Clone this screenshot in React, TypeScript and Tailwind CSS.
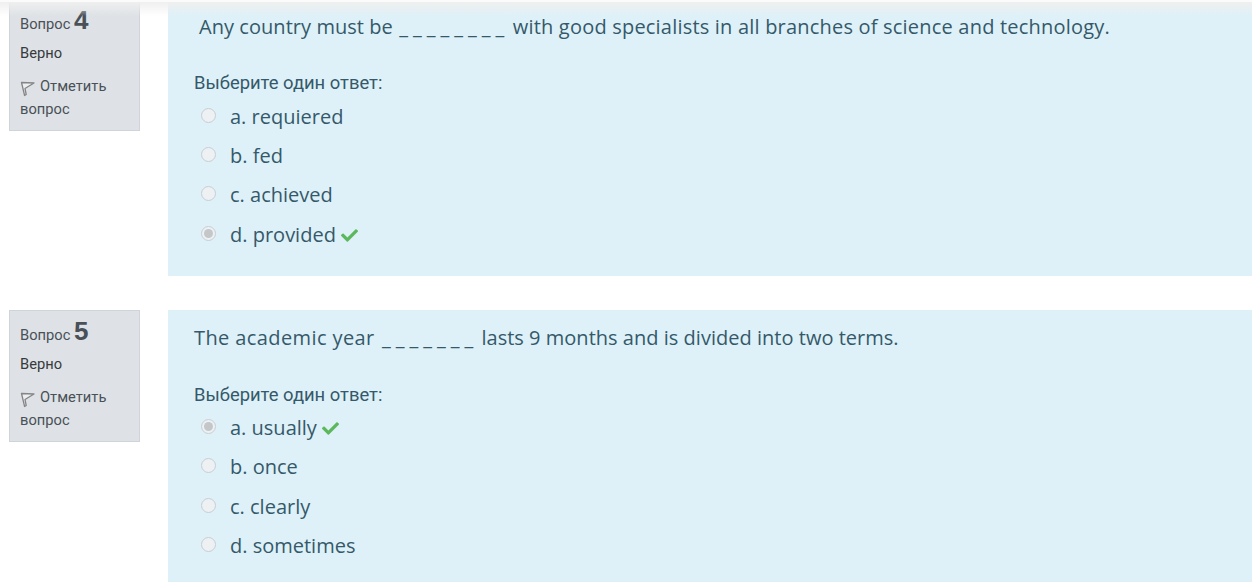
import { FaCheck } from "react-icons/fa";

const Flag = () => (
  <svg width="16" height="16" viewBox="0 0 16 16" className="inline-block mr-1 -mb-[4px]" fill="none">
    <path d="M1.5 1.5 L14 2 L5 7.5 L6.2 13.5 L4.6 14.5 Z" fill="#eceef0" stroke="#858585" strokeWidth="1.3" strokeLinejoin="round" />
  </svg>
);

type Option = { label: string; correct?: boolean; gap: string };

const Radio = ({ checked }: { checked?: boolean }) => (
  <span className="w-[15px] h-[15px] mb-[4px] rounded-full border border-[#c9cdd0] bg-[#eef1f3] flex items-center justify-center shrink-0">
    {checked && <span className="w-[9px] h-[9px] rounded-full bg-[#c4c7ca]" />}
  </span>
);

const Question = ({
  num,
  before,
  blank,
  after,
  options,
  textClass,
  beforeClass,
  blankClass,
  promptClass,
  optionsClass,
  top,
  sideTop,
}: {
  num: number;
  before: string;
  blank: string;
  after: string;
  options: Option[];
  textClass: string;
  beforeClass: string;
  blankClass: string;
  promptClass: string;
  optionsClass: string;
  top: string;
  sideTop: string;
}) => (
  <div className="flex items-start pl-[9px]">
    <div className={`w-[131px] h-[132px] shrink-0 bg-[#dee2e6] border border-[#cfd4da] pl-[10px] pt-[6px] font-['Roboto',sans-serif] text-[14.7px] text-[#373a3c] ${sideTop}`}>
      <div className="h-[28px] leading-[28px] text-[#495057]">
        Вопрос <span className="text-[26px] font-bold font-['Liberation_Sans',sans-serif] text-[#495057]">{num}</span>
      </div>
      <div className="mt-[7px] leading-[24px]">Верно</div>
      <div className="mt-[10px] leading-[23px] text-[#495057]">
        <Flag />
        Отметить вопрос
      </div>
    </div>
    <div className={`ml-[28px] flex-1 bg-[#def1f8] pl-[26px] text-[#35596a] ${top}`}>
      <div className={`font-['Open_Sans',sans-serif] text-[20px] leading-[28px] ${textClass}`}>
        <span className={beforeClass}>{before}</span> <span className={`tracking-[5px] ${blankClass}`}>{blank}</span> {after}
      </div>
      <div className={`font-['Roboto',sans-serif] text-[18.4px] leading-[28px] ${promptClass}`}>Выберите один ответ:</div>
      <div className={`pl-[7px] font-['Open_Sans',sans-serif] text-[20px] ${optionsClass}`}>
        {options.map((o) => (
          <div key={o.label} className={`flex items-center ${o.gap} h-[28px]`}>
            <Radio checked={o.correct} />
            <span className="ml-[14px] leading-[28px]">{o.label}</span>
            {o.correct && <FaCheck className="ml-[5px] text-[17px] text-[#5cb85c]" />}
          </div>
        ))}
      </div>
    </div>
  </div>
);

export default function App() {
  return (
    <div className="relative h-[582px] w-[1252px] overflow-hidden bg-white pt-[2px]">
      <div className="absolute top-0 left-0 right-0 h-[16px] border-t-2 border-[#fbfbfb] bg-gradient-to-b from-[#efefef] to-transparent z-10" />
      <Question
        num={4}
        before="Any country must be"
        blank="________"
        after="with good specialists in all branches of science and technology."
        textClass="pl-[5px] tracking-[0.2px]"
        beforeClass="tracking-[0.05px]"
        blankClass="ml-[1px] -mr-[2px]"
        promptClass="mt-[28px]"
        optionsClass="mt-[6px]"
        top="pt-[11px] h-[274px]"
        sideTop="-mt-[3px]"
        options={[
          { label: "a. requiered", gap: "mb-[11px]" },
          { label: "b. fed", gap: "mb-[11px]" },
          { label: "c. achieved", gap: "mb-[12px]" },
          { label: "d. provided", correct: true, gap: "" },
        ]}
      />
      <div className="h-[34px]" />
      <Question
        num={5}
        before="The academic year"
        blank="_______"
        after="lasts 9 months and is divided into two terms."
        textClass="tracking-[0.02px]"
        beforeClass="tracking-[0.4px]"
        blankClass="ml-[2px] -mr-[2px]"
        promptClass="mt-[29px]"
        optionsClass="mt-[5px]"
        top="pt-[14px] h-[272px]"
        sideTop=""
        options={[
          { label: "a. usually", correct: true, gap: "mb-[11px]" },
          { label: "b. once", gap: "mb-[12px]" },
          { label: "c. clearly", gap: "mb-[11px]" },
          { label: "d. sometimes", gap: "" },
        ]}
      />
    </div>
  );
}
